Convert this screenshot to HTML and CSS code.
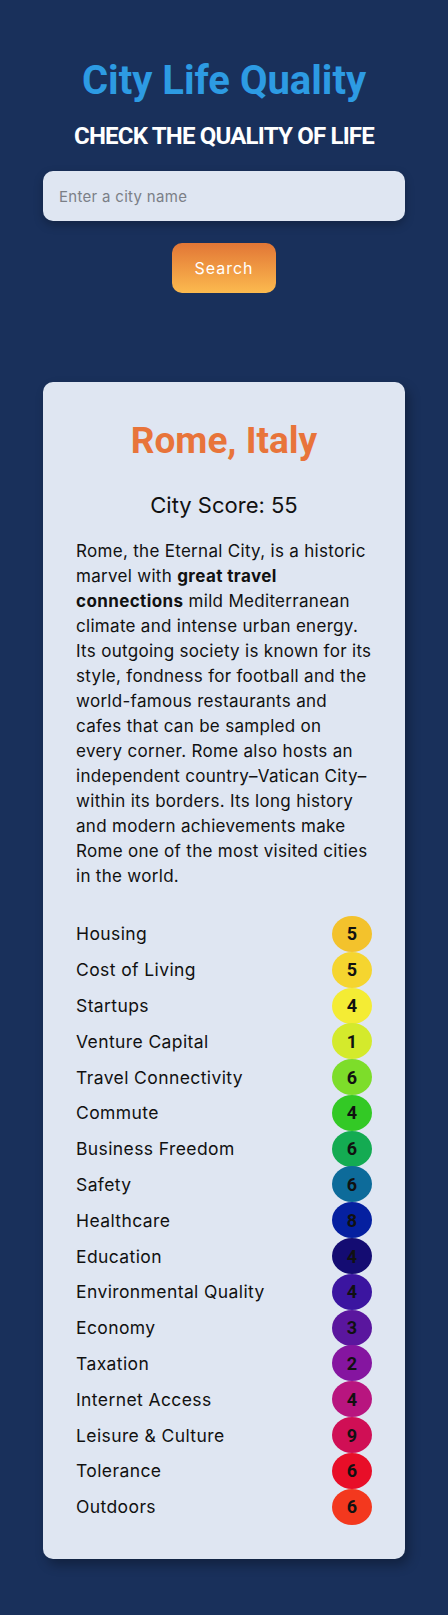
FILE: index.html
```html
<!DOCTYPE html>
<html lang="en">
<head>
<meta charset="utf-8">
<title>City Life Quality</title>
<link rel="stylesheet" href="styles.css">
</head>
<body>
<header class="hero">
  <h1 class="hero-title">City Life Quality</h1>
  <h2 class="hero-sub">CHECK THE QUALITY OF LIFE</h2>
  <input class="search-input" type="text" placeholder="Enter a city name">
  <button class="search-btn" type="button">Search</button>
</header>
<main class="card">
  <h2 class="city-name">Rome, Italy</h2>
  <p class="city-score">City Score: 55</p>
  <p class="city-desc">Rome, the Eternal City, is a historic marvel with <b>great travel connections</b> mild Mediterranean climate and intense urban energy. Its outgoing society is known for its style, fondness for football and the world-famous restaurants and cafes that can be sampled on every corner. Rome also hosts an independent country–Vatican City–within its borders. Its long history and modern achievements make Rome one of the most visited cities in the world.</p>
  <ul class="scores">
    <li class="score-row"><span class="score-label">Housing</span><span class="badge c1">5</span></li>
    <li class="score-row"><span class="score-label">Cost of Living</span><span class="badge c2">5</span></li>
    <li class="score-row"><span class="score-label">Startups</span><span class="badge c3">4</span></li>
    <li class="score-row"><span class="score-label">Venture Capital</span><span class="badge c4">1</span></li>
    <li class="score-row"><span class="score-label">Travel Connectivity</span><span class="badge c5">6</span></li>
    <li class="score-row"><span class="score-label">Commute</span><span class="badge c6">4</span></li>
    <li class="score-row"><span class="score-label">Business Freedom</span><span class="badge c7">6</span></li>
    <li class="score-row"><span class="score-label">Safety</span><span class="badge c8">6</span></li>
    <li class="score-row"><span class="score-label">Healthcare</span><span class="badge c9">8</span></li>
    <li class="score-row"><span class="score-label">Education</span><span class="badge c10">4</span></li>
    <li class="score-row"><span class="score-label">Environmental Quality</span><span class="badge c11">4</span></li>
    <li class="score-row"><span class="score-label">Economy</span><span class="badge c12">3</span></li>
    <li class="score-row"><span class="score-label">Taxation</span><span class="badge c13">2</span></li>
    <li class="score-row"><span class="score-label">Internet Access</span><span class="badge c14">4</span></li>
    <li class="score-row"><span class="score-label">Leisure &amp; Culture</span><span class="badge c15">9</span></li>
    <li class="score-row"><span class="score-label">Tolerance</span><span class="badge c16">6</span></li>
    <li class="score-row"><span class="score-label">Outdoors</span><span class="badge c17">6</span></li>
  </ul>
</main>
</body>
</html>
```
FILE: styles.css
```css
* { box-sizing: border-box; }
html, body { margin: 0; padding: 0; }
body {
  background: #19305b;
  font-family: Inter, "Open Sans", sans-serif;
  color: #111;
  padding-bottom: 56px;
}
.hero {
  display: flex;
  flex-direction: column;
  align-items: center;
  padding: 57px 43px 0;
}
.hero-title {
  margin: 0;
  font-family: Roboto, sans-serif;
  font-weight: 700;
  font-size: 40px;
  line-height: 48px;
  color: #2d9be3;
}
.hero-sub {
  margin: 17px 0 0;
  font-family: Roboto, sans-serif;
  font-weight: 700;
  font-size: 24px;
  line-height: 28px;
  color: #fff;
  letter-spacing: -0.8px;
}
.search-input {
  margin-top: 21px;
  width: 100%;
  height: 50px;
  border: none;
  border-radius: 10px;
  background: #dfe6f2;
  padding: 0 16px;
  font-family: Inter, sans-serif;
  font-size: 15px;
  letter-spacing: 0.3px;
  color: #333;
  box-shadow: 0 4px 10px rgba(0, 0, 0, 0.25);
  outline: none;
}
.search-input::placeholder { color: #7b7f87; }
.search-btn {
  margin-top: 22px;
  width: 104px;
  height: 50px;
  border: none;
  border-radius: 10px;
  background: linear-gradient(to bottom, #e27636, #fcba4f);
  color: #fff;
  font-family: Inter, sans-serif;
  font-size: 16px;
  letter-spacing: 1px;
}
.card {
  margin: 89px 43px 0;
  background: #dfe6f2;
  border-radius: 10px;
  padding: 38px 33px 34px;
  box-shadow: 4px 6px 12px rgba(0, 0, 0, 0.3);
}
.city-name {
  margin: 0;
  text-align: center;
  font-family: Roboto, sans-serif;
  font-weight: 700;
  font-size: 37px;
  line-height: 42px;
  color: #e8743a;
}
.city-score {
  margin: 30px 0 0;
  text-align: center;
  font-size: 22px;
  line-height: 27px;
}
.city-desc {
  margin: 20px 0 0;
  font-size: 17px;
  letter-spacing: 0.3px;
  line-height: 25px;
}
.city-desc b { font-weight: 700; letter-spacing: 0.4px; }
.scores {
  list-style: none;
  margin: 27px 0 0;
  padding: 0;
}
.score-row {
  display: flex;
  align-items: center;
  justify-content: space-between;
  height: 35.8px;
}
.score-label {
  font-size: 17.5px;
  letter-spacing: 0.4px;
}
.badge {
  width: 40px;
  height: 36px;
  border-radius: 50%;
  display: flex;
  align-items: center;
  justify-content: center;
  font-family: Roboto, sans-serif;
  font-weight: 700;
  font-size: 18px;
  color: #111;
}
.c1 { background: #f3c22c; }
.c2 { background: #f5d52f; }
.c3 { background: #f4ec34; }
.c4 { background: #d4ea2c; }
.c5 { background: #7ddd2a; }
.c6 { background: #33c925; }
.c7 { background: #14ab52; }
.c8 { background: #0d6b9a; }
.c9 { background: #0520a0; }
.c10 { background: #140c72; }
.c11 { background: #3b15a0; }
.c12 { background: #5a169e; }
.c13 { background: #8515a0; }
.c14 { background: #b8157f; }
.c15 { background: #d00f55; }
.c16 { background: #e80e28; }
.c17 { background: #f3381e; }
```
